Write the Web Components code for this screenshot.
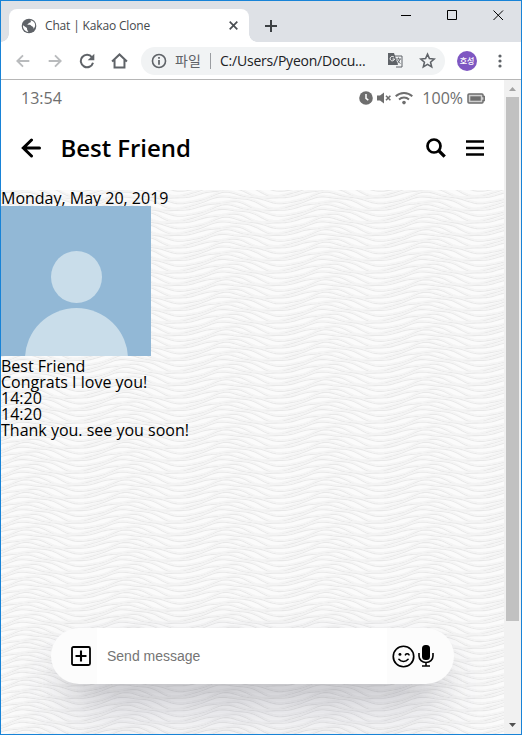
<!DOCTYPE html>
<html lang="en"><head><meta charset="utf-8"><title>Chat | Kakao Clone</title>
<style>html,body{margin:0;height:100%;overflow:hidden}body{font-family:"Open Sans","Noto Sans CJK KR",sans-serif}</style></head>
<body><browser-window></browser-window>
<script>
const define = (name, html, after) => customElements.define(name, class extends HTMLElement {
  constructor(){ super(); this.attachShadow({mode:'open'}).innerHTML = html; if(after) after(this); }
});

const glyphs = {
  globe:['0 0 24 24','<circle cx="12" cy="12" r="11" fill="currentColor"/><path d="M3 11l6 4v2l2 4c-5-.5-8.500-5-8-10zM14 3.200c2 2 0 4-2 4-1 1-1 3-4 3h5c2 0 2 2 4 2.500 1 0 2 1 1.500 3.500 5-4 3-12-4.500-13z" fill="#fff"/>'],
  back:['0 0 24 24','<path d="M21.500 12H4M12 3.500L3.500 12l8.500 8.500" fill="none" stroke="currentColor" stroke-width="2.800"/>'],
  forward:['0 0 24 24','<path d="M2.500 12H20M12 3.500l8.500 8.500-8.500 8.500" fill="none" stroke="currentColor" stroke-width="2.800"/>'],
  reload:['0 0 24 24','<path d="M19.500 6.500A9.300 9.300 0 1 0 21 14.500" fill="none" stroke="currentColor" stroke-width="3"/><path d="M23 1v10H13z" fill="currentColor"/>'],
  home:['0 0 24 24','<path d="M1.500 13.500L12 3.500 22.500 13.500M5 11v11h14V11" fill="none" stroke="currentColor" stroke-width="2.800"/>'],
  info:['0 0 24 24','<circle cx="12" cy="12" r="9.800" fill="none" stroke="currentColor" stroke-width="2.400"/><path d="M12 10.500v7M12 6v2.500" stroke="currentColor" stroke-width="2.600"/>'],
  star:['0 0 24 24','<path d="M12 3l2.700 6.300 6.800.6-5.200 4.500 1.600 6.600-5.900-3.500L6.100 21l1.600-6.600L2.500 9.900l6.800-.6z" fill="none" stroke="currentColor" stroke-width="2.200"/>'],
  arrow:['0 0 20 20','<path d="M18.500 10H2.500M10.500 2L2.300 10l8.200 8" fill="none" stroke="currentColor" stroke-width="3" stroke-linecap="round"/>'],
  search:['0 0 20 20','<circle cx="8" cy="8" r="6.500" fill="none" stroke="currentColor" stroke-width="2.700"/><path d="M12.700 12.700l6 6" stroke="currentColor" stroke-width="3.300"/>'],
  bars:['0 0 18 16','<path d="M0 1.500h18M0 8h18M0 14.500h18" stroke="currentColor" stroke-width="2.600"/>'],
  clock:['0 0 14 14','<circle cx="7" cy="7" r="6.800" fill="currentColor"/><path d="M7 3v4.400l2.300 1.700" fill="none" stroke="#fff" stroke-width="1.500"/>'],
  mute:['0 0 16 14','<path d="M1 4.500h3L8 1.500v11L4 9.500H1z" fill="currentColor"/><path d="M10 4.800l4.400 4.400m0-4.400L10 9.200" stroke="currentColor" stroke-width="1.600"/>'],
  wifi:['0 0 18 14','<path d="M.7 5.300a12 12 0 0 1 16.600 0M4 8.500a7.400 7.400 0 0 1 10 0" fill="none" stroke="currentColor" stroke-width="1.900"/><circle cx="9" cy="11.600" r="1.800" fill="currentColor"/>'],
  battery:['0 0 18 11','<path d="M2 1h13q1 0 1 1v1.500h1.200v4H16V9q0 1-1 1H2Q1 10 1 9V2q0-1 1-1z" fill="#cfcfcf" stroke="currentColor" stroke-width="1.500"/><path d="M3.300 3.300h10.500v4.400H3.300z" fill="currentColor"/>'],
  plus:['0 0 20 20','<rect x="1" y="1" width="18" height="18" rx="1.500" fill="none" stroke="currentColor" stroke-width="1.800"/><path d="M10 4.500v11M4.500 10h11" stroke="currentColor" stroke-width="2.100"/>'],
  wink:['0 0 22 22','<circle cx="11" cy="11" r="9.800" fill="none" stroke="currentColor" stroke-width="1.600"/><circle cx="7.600" cy="9" r="1.400" fill="currentColor"/><path d="M12.800 9.400c.7-1.300 2.700-1.300 3.500 0M6.600 13.700c2.200 2.800 6.600 2.800 8.800 0" fill="none" stroke="currentColor" stroke-width="1.500" stroke-linecap="round"/>'],
  mic:['0 0 16 22','<rect x="4" y="0" width="8" height="15" rx="3.500" fill="currentColor"/><path d="M1 8v3a7 6.500 0 0 0 14 0V8M8 17.500v4M4 21h8" fill="none" stroke="currentColor" stroke-width="1.600"/>'],
  translate:['0 0 15 15','<path d="M6 3h8v11H8" fill="none" stroke="currentColor"/><path d="M0 0h6l4 12H0z" fill="currentColor"/><path d="M6 4.200A2.200 2.200 0 1 0 6.500 6H4.500" fill="none" stroke="#fff"/><path d="M8 6h5M10.500 4.500V6M12 6q-.5 3-3 4.500M9.500 7q1 2.500 3 3.500" fill="none" stroke="currentColor" stroke-width=".9"/>']
};
customElements.define('ui-icon', class extends HTMLElement {
  connectedCallback(){
    const [box, art] = glyphs[this.getAttribute('name')];
    const w=this.getAttribute('w'), h=this.getAttribute('h')||w;
    this.attachShadow({mode:'open'}).innerHTML =
    `<style>:host{display:block;flex:none;width:${w}px;height:${h}px}svg{display:block}</style><svg width="${w}" height="${h}" viewBox="${box}">${art}</svg>`;
  }
});

define('tab-strip', `<style>
:host{display:flex;height:41px;padding:8px 0 0 8px;box-sizing:border-box;background:#dee1e6;color:#3c4043}
.tab{display:flex;align-items:center;width:240px;height:33px;box-sizing:border-box;padding:0 11px 0 12px;background:#fff;border-radius:8px 8px 0 0;font:12px "Open Sans",sans-serif}
.foot{width:8px;height:8px;align-self:flex-end;background:radial-gradient(circle at 100% 0,#dee1e6 7.500px,#fff 8px)}
.foot.l{margin-left:-8px;background:radial-gradient(circle at 0 0,#dee1e6 7.500px,#fff 8px)}
ui-icon{color:#5f6368}span{flex:1;margin-left:8px;letter-spacing:-.16px;color:#45494d}
.add{margin:11px 0 0 8px}.controls{display:flex;margin:0 17px 0 auto;gap:35px}svg{display:block}
</style><i class="foot l"></i><div class="tab"><ui-icon name="globe" w="16"></ui-icon><span>Chat | Kakao Clone</span><svg width="9" height="9"><path d="M.7.7l7.600 7.600m0-7.600L.7 8.300" stroke="#4b4f53" stroke-width="1.700"/></svg></div><i class="foot"></i>
<svg class="add" width="12" height="12"><path d="M6 0v12M0 6h12" stroke="#3c4043" stroke-width="2"/></svg>
<div class="controls"><svg width="11" height="11"><path d="M0 6.500h10" stroke="#000"/></svg><svg width="11" height="11"><path d="M.5 1.500h9v9h-9z" fill="none" stroke="#000"/></svg><svg width="11" height="12"><path d="M.5 1.500l9.500 9.500M10 1.500L.5 11" stroke="#000"/></svg></div>`);

define('address-bar', `<style>
:host{display:flex;align-items:center;height:38px;box-sizing:border-box;background:#fff;border-bottom:1px solid #b6b6b6;padding:0 19px 0 14px;color:#5f6368}
.dim{color:#b9bbbd}.url{display:flex;align-items:center;width:304px;height:28px;box-sizing:border-box;border-radius:14px;background:#f1f3f4;margin-left:13px;padding:0 9px 0 10px;font:14px "Open Sans","Noto Sans CJK KR",sans-serif}
.kind{margin-left:8px;width:27px;white-space:nowrap;line-height:20px}.rule{width:1px;height:16px;background:#9a9da1;margin:0 9px 0 8px}.path{color:#202124;flex:1;letter-spacing:-.22px;white-space:nowrap}
.face{display:grid;place-items:center;width:20px;height:20px;border-radius:50%;background:#7e57c2;color:#fff;font:500 8px/10px "Noto Sans CJK KR",sans-serif;margin-left:12px}
</style><ui-icon class="dim" name="back" w="16"></ui-icon><ui-icon class="dim" name="forward" w="16" style="margin-left:16px"></ui-icon><ui-icon name="reload" w="16" style="margin-left:16px"></ui-icon><ui-icon name="home" w="17" style="margin-left:16px"></ui-icon>
<div class="url"><ui-icon name="info" w="16"></ui-icon><span class="kind">파일</span><i class="rule"></i><span class="path">C:/Users/Pyeon/Docu...</span><ui-icon name="translate" w="15"></ui-icon><ui-icon name="star" w="17" style="margin-left:16px"></ui-icon></div>
<span class="face">호성</span><svg width="4" height="16" style="margin:0 0 0 auto"><g fill="#5f6368"><circle cx="2" cy="3" r="1.600"/><circle cx="2" cy="8" r="1.600"/><circle cx="2" cy="13" r="1.600"/></g></svg>`);

define('chat-header', `<style>
:host{display:flex;flex-direction:column;flex:none;height:110px;background:#fff}
.status{display:flex;align-items:center;height:37px;box-sizing:border-box;padding:0 19px 1px 20px;font-size:16px;color:#6e6e6e}.status span:first-child{flex:1}
.title{display:flex;align-items:center;height:62px;padding:0 20px}h1{flex:1;margin:0 0 2px 19.500px;font-size:24px;font-weight:600;line-height:33px;letter-spacing:-.05px}
</style><div class="status"><span>13:54</span><ui-icon name="clock" w="14"></ui-icon><ui-icon name="mute" w="16" h="14" style="margin-left:3px"></ui-icon><ui-icon name="wifi" w="18" h="14" style="margin-left:3px"></ui-icon><span style="margin:0 4px 0 9px">100%</span><ui-icon name="battery" w="18" h="11"></ui-icon></div>
<div class="title"><ui-icon name="arrow" w="20"></ui-icon><h1>Best Friend</h1><ui-icon name="search" w="20" style="margin-bottom:1px"></ui-icon><ui-icon name="bars" w="18" h="16" style="margin:0 0 1px 20px"></ui-icon></div>`);

define('chat-log', `<style>:host{display:block;font-size:16px;line-height:16px;color:#000}svg{display:block}.after{padding-top:2px}</style>
<div>Monday, May 20, 2019</div><svg width="150" height="150"><path fill="#92b8d6" d="M0 0h150v150H0z"/><g fill="#c9ddea"><ellipse cx="75.500" cy="71" rx="25.500" ry="26"/><ellipse cx="75.500" cy="153" rx="51.500" ry="51"/></g></svg>
<div class="after">Best Friend</div><div>Congrats I love you!</div><div>14:20</div><div>14:20</div><div>Thank you. see you soon!</div>`);

define('message-bar', `<style>
:host{display:flex;align-items:center;box-sizing:border-box;width:403px;height:56px;padding-left:20px;border-radius:28px;background:#fcfcfc;box-shadow:0 30px 60px -12px rgba(50,50,93,.25),0 18px 36px -18px rgba(0,0,0,.3)}
input{width:290px;height:56px;box-sizing:border-box;border:0;padding:0 10px;margin:0 5px 0 6px;background:#fff;font:14px "Liberation Sans",sans-serif}input::placeholder{color:#757575}
</style><ui-icon name="plus" w="20"></ui-icon><input placeholder="Send message"><ui-icon name="wink" w="23"></ui-icon><ui-icon name="mic" w="16" h="22" style="margin-left:3px"></ui-icon>`);

define('scroll-bar', `<style>:host{display:flex;flex-direction:column;align-items:center;width:17px;flex:none;background:#f1f1f1}svg{display:block;flex:none}.thumb{width:13px;height:524px;background:#c1c1c1}.gap{flex:1}</style>
<svg width="17" height="17"><path d="M5 11l3.500-4 3.500 4z" fill="#a3a3a3"/></svg><div class="thumb"></div><div class="gap"></div><svg width="17" height="17"><path d="M5 6l3.500 4L12 6z" fill="#505050"/></svg>`);

define('wave-field', `<style>:host{display:block;position:absolute;inset:110px 0 0;overflow:hidden;background:#fbfbfb}svg{display:block;width:100%;height:100%}</style><svg></svg>`, el => {
  let out='';
  for(let k=-6;k<138;k++){
    let d='';
    const m=(k+6)%3;
    for(let x=-4;x<=508;x+=3){
      const p=2*Math.PI*(x-27)/100;
      const y=k*4.170-[6,4.500,5.200][m]*Math.cos(p+[0,.15,-.15][m])+.8*Math.cos(2*p+m*2.100)+.7*Math.sin(3*p+m*2.600);
      d+=(d?'L':'M')+x+' '+y.toFixed(1);
    }
    out+=`<path d="${d}" stroke="#e8e8e8" stroke-width="1.100"/><path d="${d}" transform="translate(0 -1.300)" stroke="#f4f4f4" stroke-width="1.500"/>`;
  }
  el.shadowRoot.querySelector('svg').innerHTML=`<g fill="none">${out}</g>`;
});

define('browser-window', `<style>
:host{display:flex;flex-direction:column;box-sizing:border-box;width:522px;height:735px;border:1px solid #1883d7;overflow:hidden}
.view{display:flex;flex:1;min-height:0}.page{position:relative;display:flex;flex-direction:column;width:503px;overflow:hidden}chat-header,chat-log{position:relative}message-bar{position:absolute;left:50px;bottom:50px}
tab-strip,address-bar{flex:none}
</style><tab-strip></tab-strip><address-bar></address-bar><div class="view"><main class="page"><wave-field></wave-field><chat-header></chat-header><chat-log></chat-log><message-bar></message-bar></main><scroll-bar></scroll-bar></div>`);
</script></body></html>
